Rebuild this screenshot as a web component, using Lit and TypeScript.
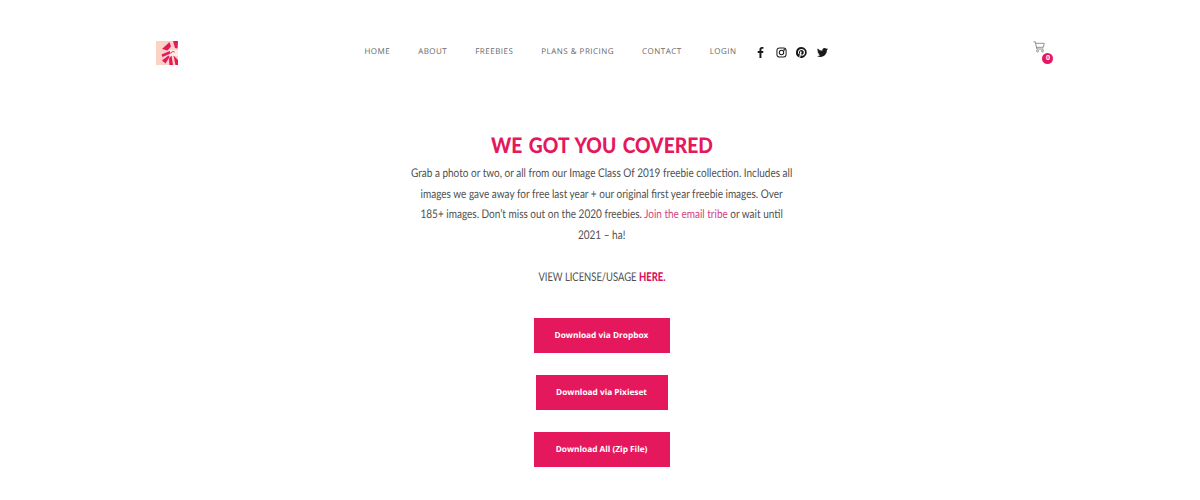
import { LitElement, html, css, svg } from "lit";
import { customElement } from "lit/decorators.js";

const petals = [
  "M6 8 L13.500 1 L15 5.500 L11.500 9.500 Z",
  "M17 0 L22 0 L21.500 7.500 L19 7 Z",
  "M5.500 13.500 L14 10 L14.500 12.500 L6.500 16 Z",
  "M6 19.500 L12.500 14.500 L13.500 16 L9.500 22.500 Z",
  "M13 17.500 L15.500 14.500 L17 24 L13.500 24 Z",
  "M17.500 14.500 L22 19 L22 24 L19.500 24 Z",
];

@customElement("app-root")
export class AppRoot extends LitElement {
  static styles = css`
    :host { display: block; width: 1200px; height: 500px; background: #fff; overflow: hidden; font-family: "Lato", sans-serif; text-rendering: geometricPrecision; }
    .header { display: flex; align-items: flex-start; justify-content: space-between; padding: 41px 146px 0 156px; height: 89px; box-sizing: content-box; }
    .logo { display: block; width: 22px; height: 24px; }
    .nav { display: flex; align-items: center; gap: 28px; padding-top: 3px; margin-right: 19px; }
    .nav a { font-family: "Open Sans", sans-serif; font-size: 8px; font-weight: 400; letter-spacing: 0.48px; color: #666; line-height: 15px; text-transform: uppercase; white-space: nowrap; }
    .social { display: flex; align-items: center; gap: 9.500px; margin-left: -9.500px; padding-top: 2px; }
    .social svg { display: block; width: 11px; height: 11px; fill: #1a1a1a; }
    .cart { position: relative; width: 21px; height: 24px; }
    .cart svg { display: block; width: 12px; height: 12px; stroke: #777; fill: none; }
    .badge { position: absolute; left: 9.500px; top: 12px; width: 11px; height: 11px; border-radius: 50%; background: #e5185d; color: #fff; font: 700 7px/11px "Open Sans", sans-serif; text-align: center; }
    .main { display: flex; flex-direction: column; align-items: center; padding-left: 3px; }
    h1 { margin: 0; font: 900 21.500px/30px "Lato", sans-serif; color: #e5185d; text-align: center; white-space: nowrap; word-spacing: 2px; transform: scaleX(0.895); }
    p { margin: 0; font-size: 12px; font-weight: 400; line-height: 20.7px; color: #505050; text-align: center; white-space: nowrap; }
    .intro { margin-top: 3px; transform: scaleX(0.834); }
    .intro a { color: #d5417f; }
    .license { margin-top: 21px; transform: scaleX(0.785); }
    .license b { color: #d9115f; font-weight: 900; }
    .buttons { display: flex; flex-direction: column; align-items: center; gap: 22px; margin-top: 30px; }
    .btn { display: flex; align-items: center; justify-content: center; height: 35px; background: #e5185d; color: #fff; font: 700 8.300px/12px "Open Sans", sans-serif; padding-top: 1px; box-sizing: border-box; }
    .wide { width: 136px; }
    .narrow { width: 132px; }
  `;

  render() {
    return html`
      <div class="header">
        <svg class="logo" viewBox="0 0 22 24">
          <rect width="22" height="24" fill="#fbd3c4"></rect>
          <path d="M14 9 L22 9 L22 15 L14 15 Z" fill="#fdeee8"></path>
          ${petals.map((d) => svg`<path d=${d} fill="#e5185d"></path>`)}
          <path d="M15 12.500a2.200 2.200 0 0 1 3.600-1.400" fill="none" stroke="#e5185d" stroke-width="1"></path>
        </svg>
        <div class="nav">
          <a>Home</a><a>About</a><a>Freebies</a><a>Plans &amp; Pricing</a><a>Contact</a><a>Login</a>
          <div class="social">
            <svg viewBox="0 0 24 24"><path d="M14 24V13h3.700l.6-4.300H14V6c0-1.200.4-2 2.100-2h2.300V.2C18 .1 16.700 0 15.200 0 12 0 9.700 2 9.700 5.600v3.100H6V13h3.700v11z"></path></svg>
            <svg viewBox="0 0 24 24" style="fill:none;stroke:#1a1a1a;stroke-width:2.200"><rect x="2" y="2" width="20" height="20" rx="5.500"></rect><circle cx="12" cy="12" r="4.800"></circle><circle cx="17.800" cy="6.200" r=".8"></circle></svg>
            <svg viewBox="0 0 24 24"><path fill-rule="evenodd" d="M12 0a12 12 0 0 0-4.400 23.200c-.1-.9-.2-2.400 0-3.400l1.400-6s-.4-.7-.4-1.800c0-1.700 1-2.900 2.200-2.900 1 0 1.500.8 1.500 1.700 0 1-.7 2.600-1 4-.3 1.200.6 2.200 1.800 2.200 2.100 0 3.800-2.300 3.800-5.500 0-2.900-2.100-4.900-5-4.900-3.400 0-5.400 2.600-5.400 5.200 0 1 .4 2.100.9 2.700.1.100.1.200.1.300l-.3 1.400c-.1.200-.2.300-.4.200-1.500-.7-2.400-2.900-2.400-4.700 0-3.800 2.800-7.300 8-7.300 4.200 0 7.400 3 7.400 7 0 4.200-2.600 7.500-6.300 7.500-1.200 0-2.400-.6-2.800-1.400l-.8 2.900c-.3 1.100-1 2.400-1.500 3.200A12 12 0 1 0 12 0z"></path></svg>
            <svg viewBox="0 0 24 24"><path d="M24 4.600a9.800 9.800 0 0 1-2.800.8 4.900 4.900 0 0 0 2.100-2.700 9.800 9.800 0 0 1-3.100 1.200 4.900 4.900 0 0 0-8.400 4.500A14 14 0 0 1 1.700 3.200a4.900 4.900 0 0 0 1.500 6.600 4.900 4.900 0 0 1-2.200-.6v.1a4.900 4.900 0 0 0 3.900 4.800 4.900 4.900 0 0 1-2.200.1 4.900 4.900 0 0 0 4.600 3.400A9.900 9.900 0 0 1 0 19.600 14 14 0 0 0 7.500 21.800c9.100 0 14-7.500 14-14v-.6A10 10 0 0 0 24 4.600z"></path></svg>
          </div>
        </div>
        <div class="cart">
          <svg viewBox="0 0 12 12"><path d="M.5 .8H2.300L3.800 8H10.500M2.700 2.300H11.300L10.300 6.300H3.400" stroke-width=".8"></path><circle cx="4.500" cy="10" r="1" stroke-width=".7"></circle><circle cx="9.500" cy="10" r="1" stroke-width=".7"></circle></svg>
          <span class="badge">0</span>
        </div>
      </div>
      <div class="main">
        <h1>WE GOT YOU COVERED</h1>
        <p class="intro">Grab a photo or two, or all from our Image Class Of 2019 freebie collection. Includes all<br>images we gave away for free last year + our original first year freebie images. Over<br>185+ images. Don’t miss out on the 2020 freebies. <a>Join the email tribe</a> or wait until<br>2021 – ha!</p>
        <p class="license">VIEW LICENSE/USAGE <b>HERE.</b></p>
        <div class="buttons">
          <a class="btn wide">Download via Dropbox</a>
          <a class="btn narrow">Download via Pixieset</a>
          <a class="btn wide">Download All (Zip File)</a>
        </div>
      </div>
    `;
  }
}
